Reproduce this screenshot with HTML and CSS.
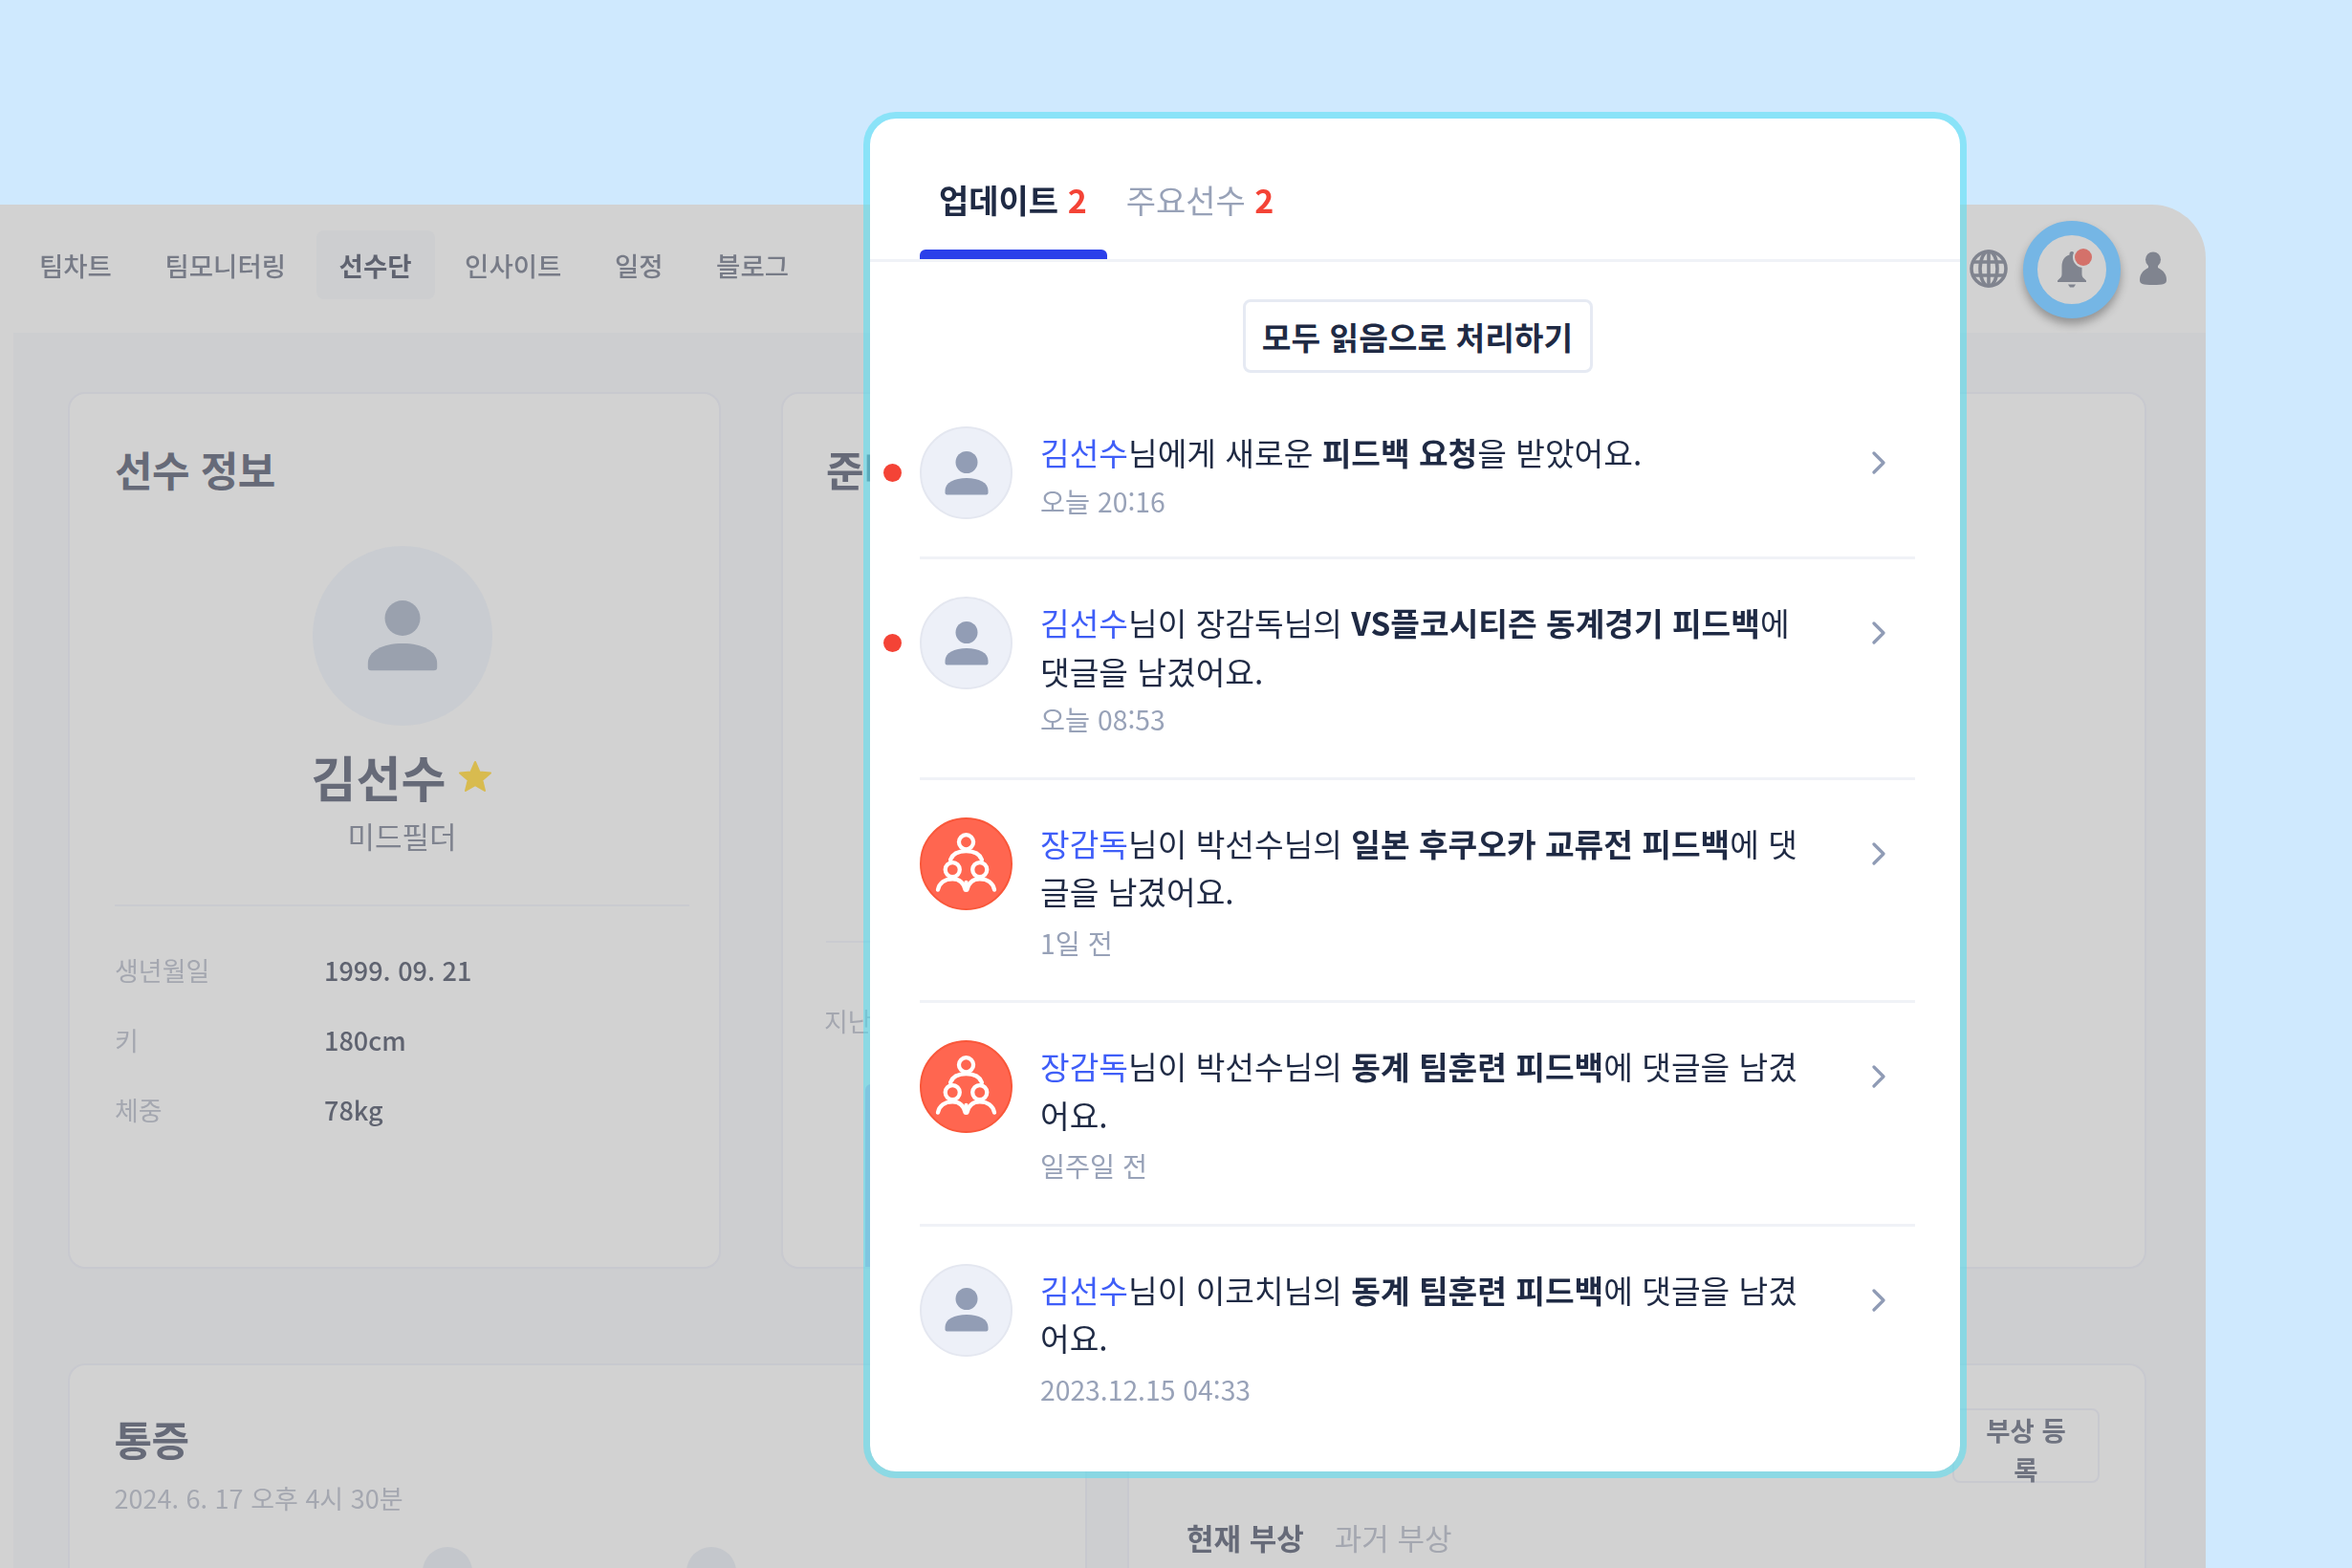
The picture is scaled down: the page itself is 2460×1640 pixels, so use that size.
FILE: index.html
```html
<!DOCTYPE html>
<html lang="ko">
<head>
<meta charset="utf-8">
<title>알림</title>
<link rel="stylesheet" href="styles.css">
</head>
<body>
<svg class="defs" width="0" height="0" aria-hidden="true">
  <symbol id="person" viewBox="0 0 46 46">
    <circle cx="23" cy="11.5" r="11.5"/>
    <path d="M0.5 41C0.5 33 10 28 23 28S45.5 33 45.5 41V43.5A2 2 0 0 1 43.5 45.5H2.5A2 2 0 0 1 0.5 43.5Z"/>
  </symbol>
  <symbol id="team" viewBox="0 0 96 96">
    <g fill="none" stroke="#fff" stroke-width="4.4" stroke-linecap="round">
      <circle cx="48" cy="24.500" r="7.800"/>
      <path d="M31 43.500C33.500 37 40 34.300 48 34.300S62.500 37 65 43.500"/>
      <circle cx="33.300" cy="54.300" r="7.800"/>
      <circle cx="62.700" cy="54.300" r="7.800"/>
      <path d="M17.500 76C19 68.500 25 64.300 33.300 64.300S45.500 69 47 76"/>
      <path d="M49 76C50.500 69 54.500 64.300 62.700 64.300S77 68.500 78.500 76"/>
      <path d="M48 68V76"/>
    </g>
  </symbol>
  <symbol id="chev" viewBox="0 0 14 24">
    <path d="M2 2L12 12L2 22" fill="none" stroke="#8f9bb5" stroke-width="3.2" stroke-linecap="round" stroke-linejoin="round"/>
  </symbol>
</svg>

<div class="app">
  <header class="topbar">
    <nav class="nav">
      <a class="nav-item">팀차트</a>
      <a class="nav-item">팀모니터링</a>
      <a class="nav-item active">선수단</a>
      <a class="nav-item">인사이트</a>
      <a class="nav-item">일정</a>
      <a class="nav-item">블로그</a>
    </nav>
    <div class="tools">
      <svg class="globe" viewBox="0 0 40 40" fill="none" stroke="#80848f" stroke-width="3.6">
        <circle cx="20" cy="20" r="18"/>
        <ellipse cx="20" cy="20" rx="9" ry="18"/>
        <path d="M3.500 13H36.500M3.500 27H36.500M20 2V38"/>
      </svg>
      <div class="bell">
        <svg class="bell-icon" viewBox="0 0 32 38" fill="#80848f">
          <path d="M16 0C17.500 0 18.500 1 18.500 2.500V3.500C24 5 26.500 10 26.500 16V24C26.500 27 28.500 28 31 30.500V32H1V30.500C3.500 28 5.500 27 5.500 24V16C5.500 10 8 5 13.500 3.500V2.500C13.500 1 14.500 0 16 0Z"/>
          <path d="M12 34.500H20L18 37.500H14Z"/>
        </svg>
        <span class="bell-dot"></span>
      </div>
      <svg class="me" viewBox="0 0 30 36" fill="#80848f">
        <circle cx="15" cy="8.500" r="8"/>
        <path d="M10 13H20V17C26 20 29 24 29 30C29 34 26 35 15 35S1 34 1 30C1 24 4 20 10 17Z"/>
      </svg>
    </div>
  </header>

  <main class="main">
    <section class="row-top">
      <article class="card info">
        <h2 class="card-title">선수 정보</h2>
        <div class="profile">
          <div class="big-avatar"><svg class="big-person"><use href="#person"/></svg></div>
          <div class="name-line">
            <span class="name">김선수</span>
            <svg class="star" viewBox="0 0 36 34"><path d="M18 2L22.500 12.500L34 13.500L25.300 21L28 32L18 26.200L8 32L10.700 21L2 13.500L13.500 12.500Z" fill="#d8bb4f" stroke="#d8bb4f" stroke-width="2" stroke-linejoin="round"/></svg>
          </div>
          <div class="position">미드필더</div>
        </div>
        <dl class="facts">
          <div class="fact"><dt>생년월일</dt><dd>1999. 09. 21</dd></div>
          <div class="fact"><dt>키</dt><dd>180cm</dd></div>
          <div class="fact"><dt>체중</dt><dd>78kg</dd></div>
        </dl>
      </article>
      <article class="card ready">
        <h2 class="card-title">준비도</h2>
        <div class="ready-rule"></div>
        <p class="ready-note">지난 측정</p>
        <div class="ready-bar"></div>
      </article>
    </section>
    <section class="row-bottom">
      <article class="card pain">
        <h2 class="card-title">통증</h2>
        <p class="pain-date">2024. 6. 17 오후 4시 30분</p>
        <div class="body-map"><span class="body-head"></span><span class="body-head"></span></div>
      </article>
      <article class="card injury">
        <div class="injury-head"><button class="injury-btn">부상 등록</button></div>
        <div class="injury-tabs"><span class="strong">현재 부상</span><span>과거 부상</span></div>
      </article>
    </section>
  </main>
</div>

<aside class="panel">
  <div class="tabs">
    <div class="tab active">업데이트 <b>2</b></div>
    <div class="tab">주요선수 <b>2</b></div>
  </div>
  <div class="panel-body">
    <div class="read-wrap"><button class="read-all">모두 읽음으로 처리하기</button></div>
    <ul class="list">
      <li class="item unread">
        <span class="avatar"><svg class="person"><use href="#person"/></svg></span>
        <div class="copy">
          <p class="msg"><a>김선수</a>님에게 새로운 <strong>피드백 요청</strong>을 받았어요.</p>
          <time>오늘 20:16</time>
        </div>
        <svg class="chev"><use href="#chev"/></svg>
      </li>
      <li class="item unread">
        <span class="avatar"><svg class="person"><use href="#person"/></svg></span>
        <div class="copy">
          <p class="msg"><a>김선수</a>님이 장감독님의 <strong>VS플코시티즌 동계경기 피드백</strong>에 댓글을 남겼어요.</p>
          <time>오늘 08:53</time>
        </div>
        <svg class="chev"><use href="#chev"/></svg>
      </li>
      <li class="item">
        <span class="avatar team"><svg class="team-icon"><use href="#team"/></svg></span>
        <div class="copy">
          <p class="msg"><a>장감독</a>님이 박선수님의 <strong>일본 후쿠오카 교류전 피드백</strong>에 댓글을 남겼어요.</p>
          <time>1일 전</time>
        </div>
        <svg class="chev"><use href="#chev"/></svg>
      </li>
      <li class="item">
        <span class="avatar team"><svg class="team-icon"><use href="#team"/></svg></span>
        <div class="copy">
          <p class="msg"><a>장감독</a>님이 박선수님의 <strong>동계 팀훈련 피드백</strong>에 댓글을 남겼어요.</p>
          <time>일주일 전</time>
        </div>
        <svg class="chev"><use href="#chev"/></svg>
      </li>
      <li class="item">
        <span class="avatar"><svg class="person"><use href="#person"/></svg></span>
        <div class="copy">
          <p class="msg"><a>김선수</a>님이 이코치님의 <strong>동계 팀훈련 피드백</strong>에 댓글을 남겼어요.</p>
          <time>2023.12.15 04:33</time>
        </div>
        <svg class="chev"><use href="#chev"/></svg>
      </li>
    </ul>
  </div>
</aside>
</body>
</html>
```

FILE: styles.css
```css
* { box-sizing: border-box; }

html, body { margin: 0; height: 1640px; }

body {
  position: relative;
  overflow: hidden;
  padding: 214px 153px 0 0;
  background: #cfe9fe;
  font-family: "Noto Sans CJK KR", "Noto Sans", sans-serif;
  color: #1f2a44;
}

.defs { position: absolute; }

h2, p, dl, dd, ul { margin: 0; padding: 0; }
ul { list-style: none; }
button { font: inherit; cursor: pointer; }

/* dimmed app behind the popover */
.app {
  height: 1426px;
  background: #d2d2d2;
  border-top-right-radius: 56px;
  overflow: hidden;
  filter: blur(0.5px);
}

.topbar {
  display: flex;
  align-items: center;
  height: 134px;
  padding-left: 17px;
}

.nav { display: flex; gap: 7.600px; margin-bottom: 8px; }

.nav-item {
  padding: 0 24px;
  height: 72px;
  display: flex;
  align-items: center;
  font-size: 27.500px;
  font-weight: 500;
  color: #777b87;
  border-radius: 8px;
}

.nav-item.active {
  background: #cdced0;
  color: #5f6370;
  font-weight: 700;
}

.tools {
  margin-left: auto;
  display: flex;
  align-items: center;
  padding-right: 40px;
}

.globe { width: 40px; height: 40px; }

.bell {
  position: relative;
  width: 102px;
  height: 102px;
  margin: 2px 19px 0 16px;
  display: flex;
  align-items: center;
  justify-content: center;
  border: 15px solid #75b6e5;
  border-radius: 50%;
  background: #d2d2d2;
  box-shadow: 0 6px 10px rgba(0, 0, 0, .3);
}

.bell-icon { width: 32px; height: 38px; }

.bell-dot {
  position: absolute;
  left: 39px;
  top: 14px;
  width: 18px;
  height: 18px;
  border-radius: 50%;
  background: #d4716a;
  box-shadow: 0 0 0 2px #d2d2d2;
}

.me { width: 30px; height: 36px; }

.main {
  height: 1292px;
  margin-left: 14px;
  padding: 62px 62px 0 57px;
  background: #cdced0;
}

.card {
  background: #d2d2d2;
  border: 2px solid #c8c9cf;
  border-radius: 18px;
}

.row-top {
  display: grid;
  grid-template-columns: 683px 1fr;
  gap: 63px;
  height: 917px;
}

.row-bottom {
  display: grid;
  grid-template-columns: 1fr 1fr;
  gap: 42px;
  margin-top: 98.500px;
  height: 300px;
}

.card-title {
  font-size: 43px;
  font-weight: 700;
  line-height: 60px;
  color: #666a78;
  letter-spacing: -0.5px;
}

.info { padding: 48px 31px 0 47px; }

.profile {
  display: flex;
  flex-direction: column;
  align-items: center;
  padding-top: 50.500px;
}

.big-avatar {
  width: 188px;
  height: 188px;
  display: flex;
  align-items: center;
  justify-content: center;
  background: #c9ccd1;
  border-radius: 50%;
}

.big-person { width: 74px; height: 74px; fill: #9aa1ae; }

.name-line {
  display: flex;
  align-items: center;
  gap: 13px;
  margin-top: 21.500px;
  height: 64px;
}

.name { font-size: 51px; font-weight: 700; color: #666a78; }

.star { width: 36px; height: 34px; }

.position {
  margin-top: 8px;
  font-size: 31px;
  line-height: 44px;
  color: #7f838f;
}

.facts {
  margin-top: 50px;
  padding-top: 30px;
  border-top: 2px solid #cacbd0;
}

.fact {
  display: flex;
  align-items: center;
  height: 73px;
  font-size: 27px;
}

.fact dt { width: 219px; color: #a4a7b0; }
.fact dd { color: #5f6370; font-weight: 500; }

.ready {
  display: flex;
  flex-direction: column;
  align-items: flex-start;
  padding: 48px 0 0 45px;
}

.ready-rule {
  width: 300px;
  margin-top: 464px;
  border-top: 2px solid #cacbd0;
}

.ready-note {
  margin-top: 62px;
  margin-left: -2px;
  font-size: 27px;
  line-height: 40px;
  color: #a4a7b0;
}

.ready-bar {
  flex: 1;
  width: 120px;
  margin: 46px 0 0 41px;
  background: #b7a8cb;
  border-radius: 6px 6px 0 0;
}

.pain { padding: 46.500px 46px 0 46.500px; }

.pain-date {
  margin-top: 13px;
  font-size: 27px;
  line-height: 40px;
  color: #a4a7b0;
}

.body-map {
  display: flex;
  gap: 224px;
  margin-top: 31px;
  padding-left: 322px;
}

.body-head {
  width: 52px;
  height: 52px;
  border-radius: 50%;
  background: #c4c7cc;
}

.injury { padding: 45px 47px 0 60px; }

.injury-head { display: flex; justify-content: flex-end; }

.injury-btn {
  width: 154px;
  height: 78px;
  padding: 0 26px;
  font-size: 27.500px;
  line-height: 41px;
  font-weight: 700;
  color: #6f7380;
  background: transparent;
  border: 2px solid #c8c9cf;
  border-radius: 8px;
}

.injury-tabs {
  display: flex;
  gap: 32px;
  margin-top: 35px;
  font-size: 31px;
  line-height: 44px;
  color: #a4a7b0;
}

.strong { color: #666a78; font-weight: 700; }

/* notification popover */
.panel {
  position: absolute;
  left: 903px;
  top: 117px;
  width: 1154px;
  height: 1429px;
  background: #fff;
  background-clip: padding-box;
  border: 7.500px solid rgba(82, 222, 242, .55);
  border-radius: 34px;
  overflow: hidden;
}

.tabs {
  display: flex;
  height: 150px;
  padding-left: 52px;
  border-bottom: 3px solid #f0f2f7;
}

.tab {
  position: relative;
  height: 147px;
  padding: 60px 21px 0 20px;
  font-size: 34px;
  line-height: 50px;
  color: #98a2b8;
}

.tab b { color: #f44336; font-weight: 700; }

.tab.active { color: #1f2a44; font-weight: 700; }

.tab.active::after {
  content: "";
  position: absolute;
  left: 0;
  right: 0;
  bottom: 0;
  height: 10px;
  background: #2b40ea;
  border-radius: 6px 6px 0 0;
}

.panel-body { padding: 38.500px 47px 0 52px; }

.read-wrap { display: flex; justify-content: center; }

.read-all {
  width: 366px;
  height: 77px;
  padding: 0;
  font-size: 33.350px;
  font-weight: 700;
  color: #1f2a44;
  background: #fff;
  border: 3px solid #e6eaf3;
  border-radius: 8px;
}

.list { margin-top: 17.500px; }

.item {
  position: relative;
  display: flex;
  align-items: flex-start;
  padding: 39px 0 35px;
  border-bottom: 3px solid #f0f2f7;
}

.item:first-child { padding-bottom: 33px; }

.item:last-child { border-bottom: 0; }

.item.unread::before {
  content: "";
  position: absolute;
  left: -38px;
  top: 78px;
  width: 19px;
  height: 19px;
  border-radius: 50%;
  background: #f44336;
}

.avatar {
  flex: none;
  width: 97px;
  height: 97px;
  display: flex;
  align-items: center;
  justify-content: center;
  background: #edf0f8;
  border: 2px solid #e4e7f0;
  border-radius: 50%;
}

.person { width: 46px; height: 46px; fill: #929db5; }

.avatar.team {
  background: #ff6650;
  border-color: #f9573a;
}

.team-icon { width: 93px; height: 93px; }

.copy {
  flex: none;
  width: 804px;
  margin-left: 29px;
  padding-top: 2px;
}

.msg {
  font-size: 33.350px;
  line-height: 50.500px;
}

.msg a { color: #3f5ef8; }

.msg strong { font-weight: 700; }

time {
  display: block;
  margin-top: 3px;
  font-size: 28.300px;
  line-height: 50.500px;
  color: #98a2b8;
}

.item.unread time { margin-top: 0; }

.chev {
  flex: none;
  width: 14px;
  height: 24px;
  margin: 26px 0 0 66px;
}
```
